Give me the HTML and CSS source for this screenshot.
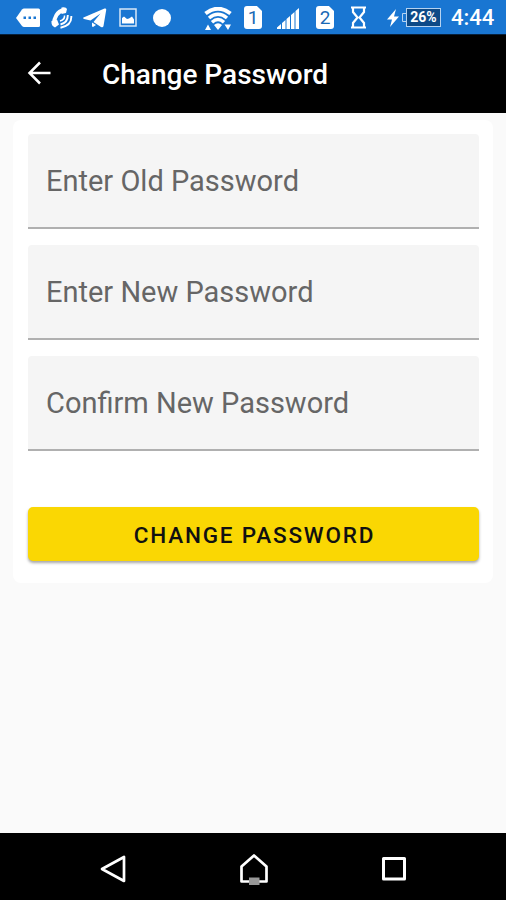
FILE: index.html
```html
<!DOCTYPE html>
<html lang="en">
  <head>
    <meta charset="utf-8">
    <title>Change Password</title>
    <link rel="stylesheet" href="styles.css">
  </head>
  <body>
    <div class="status">
      <svg class="message" width="24" height="20" viewBox="0 0 24 20">
        <path d="M0 10L6 1.500Q7 .5 8 .5H22.500Q24 .5 24 2V17.500Q24 19 22.500 19H8Q7 19 6 18Z" fill="#fff"/>
        <path d="M7.500 8.500h2.500v2.500h-2.500zM12.500 8.500h2.500v2.500h-2.500zM17.500 8.500h2.500v2.500h-2.500z" fill="#1976d2"/>
      </svg>
      <svg class="call" width="22" height="22" viewBox="0 0 22 22" fill="none" stroke="#fff">
        <path d="M13 3Q8 4 5.500 8T3 17" stroke-width="4"/>
        <path d="M10.500 .5Q15 -.5 16 2L15 6L10.500 7ZM.5 14L6 12.500L8 17.500L4 20.500Q0 19 .5 14Z" fill="#fff" stroke="none"/>
        <path d="M16.800 8Q17 15.500 9.500 17.500M20.300 9Q21 18.500 9.500 20.800" stroke-width="1.900"/>
        <path d="M13.500 8.500Q14 12.500 9 14" stroke-width="1.500"/>
      </svg>
      <svg class="plane" width="24" height="20" viewBox="0 0 24 20">
        <path d="M.5 9.500L21.500 .5Q23.500 0 23.200 2L20.500 18Q20 20 18 19L10.500 14L17.500 5.500L7.500 12.500L1 11Q-.5 10.300 .5 9.500Z" fill="#fff"/>
        <path d="M9 14.500L13 17L10 19Q9 19 9 17.500Z" fill="#fff"/>
      </svg>
      <svg class="photo" width="18" height="19" viewBox="0 0 18 19">
        <path d="M1 1H17V18H1Z" fill="none" stroke="#d7e7f7" stroke-width="1.500"/>
        <path d="M3 15.500V10L5 8.500L8 11L10 10.500L13 8.500L15 11.500V15.500Z" fill="#fff"/>
      </svg>
      <svg class="dot" width="18" height="18" viewBox="0 0 18 18">
        <circle cx="9" cy="9" r="9" fill="#fff"/>
      </svg>
      <svg class="wifi" width="28" height="24" viewBox="0 0 28 24" fill="none" stroke="#fff">
        <path d="M1.500 6.500Q14-3 26.500 6.500" stroke-width="4"/>
        <path d="M5 11Q14 3.500 23 11" stroke-width="3.500"/>
        <path d="M8 15.300Q14 9.500 20 15.300" stroke-width="3.300"/>
        <path d="M10 18Q14 14.500 18 18L14 23ZM1 23L4 17.500L7 23ZM20.500 17.500H27L24 23Z" fill="#fff" stroke="none"/>
      </svg>
      <div class="sim one">1</div>
      <svg class="signal" width="23" height="21" viewBox="0 0 23 21">
        <path d="M0 21V19.500L4 16V21ZM5 21V15L8.500 12V21ZM9.500 21V11L13 8V21ZM14 21V7L17.500 4V21ZM18.500 21V3L22 0V21Z" fill="#fff"/>
      </svg>
      <div class="sim two">2</div>
      <svg class="hourglass" width="17" height="23" viewBox="0 0 17 23">
        <path d="M1 1.500H16M1 21.500H16M3 2V6L7.500 11.500L3 17V21M14 2V6L9.500 11.500L14 17V21" fill="none" stroke="#fff" stroke-width="2.200"/>
      </svg>
      <svg class="bolt" width="13" height="18" viewBox="0 0 13 18">
        <path d="M9 0L0 10.500H5L3 18L12 7.500H7Z" fill="#fff"/>
      </svg>
      <svg class="nub" width="4" height="9" viewBox="0 0 4 9">
        <path d="M4 .5H.5V8.500H4" fill="none" stroke="#b5d3f1"/>
      </svg>
      <div class="battery">26%</div>
      <div class="time">4:44</div>
    </div>

    <header>
      <svg class="back" width="24" height="24" viewBox="0 0 24 24">
        <path d="M23.500 12H3M13 1.500L2.500 12L13 22.500" fill="none" stroke="#fff" stroke-width="2.500"/>
      </svg>
      <h1>Change Password</h1>
    </header>

    <main>
      <form class="card">
        <div class="field"><span>Enter Old Password</span></div>
        <div class="field"><span>Enter New Password</span></div>
        <div class="field"><span>Confirm New Password</span></div>
        <button type="button">CHANGE PASSWORD</button>
      </form>
    </main>

    <nav>
      <svg width="28" height="30" viewBox="0 0 28 30">
        <path d="M3 15L25 3V27Z" fill="none" stroke="#fff" stroke-width="2.700" stroke-linejoin="round"/>
      </svg>
      <svg width="30" height="32" viewBox="0 0 30 32">
        <path d="M2.500 28.500V13.500L15 2.500L27.500 13.500V28.500Z" fill="none" stroke="#fff" stroke-width="2.700" stroke-linejoin="round"/>
        <path d="M10 24.500H20.500V32H10Z" fill="#999"/>
      </svg>
      <svg width="26" height="26" viewBox="0 0 26 26">
        <path d="M2.500 2.500H23.500V23H2.500Z" fill="none" stroke="#fff" stroke-width="3" stroke-linejoin="round"/>
      </svg>
    </nav>
  </body>
</html>
```
FILE: styles.css
```css
*
{
  box-sizing: border-box;
}
body
{
  margin: 0;
  height: 900px;
  display: flex;
  flex-direction: column;
  background: #fafafa;
  font-family: Roboto, sans-serif;
}

/* status bar */
.status
{
  height: 34px;
  padding: 1px 0 0 16px;
  display: flex;
  align-items: center;
  background: #1976d2;
  color: #fff;
}
.status > *
{
  flex: none;
}
.call
{
  margin-left: 11px;
}
.plane
{
  margin-left: 10px;
}
.photo
{
  margin-left: 12px;
}
.dot
{
  margin-left: 16px;
}
.wifi
{
  margin: 2px 0 0 33px;
}
.sim
{
  width: 18px;
  height: 23px;
  border-radius: 3px;
  background: #fff;
  clip-path: polygon(0 0, 72% 0, 100% 22%, 100% 100%, 0 100%);
  color: #1a69b5;
  font-size: 19px;
  line-height: 24px;
  text-align: center;
}
.one
{
  margin-left: 12px;
}
.signal
{
  margin: 2px 0 0 15px;
}
.two
{
  margin-left: 16px;
}
.hourglass
{
  margin-left: 16px;
}
.bolt
{
  margin-left: 20px;
}
.nub
{
  margin-left: 2px;
}
.battery
{
  width: 35px;
  height: 19px;
  border: 1px solid #b5d3f1;
  background: #0d4a87;
  font-size: 14px;
  font-weight: 700;
  line-height: 17px;
  text-align: center;
}
.time
{
  margin-left: 10px;
  font-size: 22px;
  font-weight: 500;
  line-height: 34px;
}

header
{
  height: 79px;
  padding: 0 0 2px 27px;
  display: flex;
  align-items: center;
  border-top: 1px solid #06203c;
  background: #000;
  color: #fff;
}
.back
{
  margin-top: -1px;
}
h1
{
  margin: 3px 0 0 51px;
  font-size: 28px;
  font-weight: 500;
}

main
{
  flex: 1;
  padding: 7px 13px;
}
.card
{
  height: 463px;
  padding: 14px 14px 0 15px;
  border-radius: 8px;
  background: #fff;
}
.field
{
  height: 95px;
  margin-bottom: 16px;
  padding: 1px 0 0 18px;
  display: flex;
  align-items: center;
  border-bottom: 2px solid #b0b0b0;
  border-radius: 4px 4px 0 0;
  background: #f5f5f5;
  color: #666;
  font-size: 29px;
}
button
{
  width: 100%;
  height: 54px;
  margin-top: 40px;
  padding: 2px 0 0 2px;
  border: 0;
  border-radius: 5px;
  background: #fad703;
  box-shadow: 0 2px 3px rgba(0, 0, 0, 0.35);
  color: #111;
  font-family: inherit;
  font-size: 22.5px;
  font-weight: 500;
  letter-spacing: 1.8px;
}

nav
{
  height: 67px;
  padding: 5px 99px 0 99px;
  display: flex;
  align-items: center;
  justify-content: space-between;
  background: #000;
}
```
